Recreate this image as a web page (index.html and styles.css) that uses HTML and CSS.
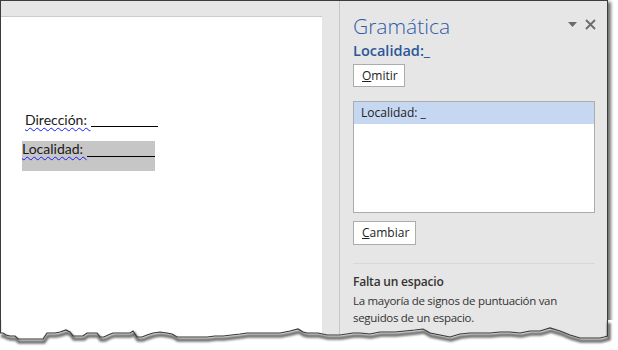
FILE: index.html
```html
<!DOCTYPE html>
<html lang="es">
<head>
<meta charset="utf-8">
<title>Gramática</title>
<link rel="stylesheet" href="styles.css">
</head>
<body>
<div class="frame">
  <div class="doc">
    <div class="page">
      <div class="line dir"><span class="word">Dirección: </span><span class="tab"></span></div>
      <div class="selbox"><div class="line loc"><span class="word">Localidad: </span><span class="tab"></span></div></div>
    </div>
  </div>
  <aside class="pane">
    <div class="pane-head">
      <h1 class="title">Gramática</h1>
      <div class="ctrls">
        <svg class="ico-drop" width="9" height="5" viewBox="0 0 9 5"><path d="M0 0H9L4.5 5Z" fill="#6b6b6b"/></svg>
        <svg class="ico-close" width="11" height="11" viewBox="0 0 11 11"><path d="M1 1L10 10M10 1L1 10" stroke="#6b6b6b" stroke-width="1.8"/></svg>
      </div>
    </div>
    <div class="err">Localidad:_</div>
    <button class="btn omit"><u>O</u>mitir</button>
    <div class="list"><div class="item active">Localidad: _</div></div>
    <button class="btn change"><u>C</u>ambiar</button>
    <hr class="sep">
    <div class="ex-title">Falta un espacio</div>
    <p class="ex-text">La mayoría de signos de puntuación van seguidos de un espacio.</p>
  </aside>
</div>
<svg class="torn" width="618" height="350" viewBox="0 0 618 350">
  <defs>
    <filter id="blur" x="-5%" y="-50%" width="110%" height="200%"><feGaussianBlur stdDeviation="1.3"/></filter>
  </defs>
  <path fill="#fff" d="M-1 333L3 333L6 335L10 336L15 336L18 339L43 339L47 333L55 333L60 332L66 330L70 332L73 336L83 336L87 333L97 333L100 337L104 337L108 335L113 333L130 333L133 331L137 337L142 337L147 335L153 333L160 332L167 333L172 334L177 337L207 337L215 336L223 336L240 334L247 333L280 333L290 331L298 329L303 332L307 333L318 333L327 335L340 335L353 333L360 333L370 334L380 332L395 332L405 331L415 330L423 329L430 333L440 335L450 337L460 334L470 333L490 333L500 332L510 332L520 333L530 331L540 331L550 328L560 331L570 335L580 338L600 338L604 337L608 336L608 320L618 320L618 350L-1 350Z"/>
  <polyline fill="none" stroke="#6e6e6e" stroke-width="3.5" filter="url(#blur)" transform="translate(1 3)" points="0 333 3 333 6 335 10 336 15 336 18 339 43 339 47 333 55 333 60 332 66 330 70 332 73 336 83 336 87 333 97 333 100 337 104 337 108 335 113 333 130 333 133 331 137 337 142 337 147 335 153 333 160 332 167 333 172 334 177 337 207 337 215 336 223 336 240 334 247 333 280 333 290 331 298 329 303 332 307 333 318 333 327 335 340 335 353 333 360 333 370 334 380 332 395 332 405 331 415 330 423 329 430 333 440 335 450 337 460 334 470 333 490 333 500 332 510 332 520 333 530 331 540 331 550 328 560 331 570 335 580 338 600 338 604 337 608 336 608 320"/>
  <polyline fill="none" stroke="#3a3a3a" stroke-width="1.2" points="0.5 320 0.5 333 3 333 6 335 10 336 15 336 18 339 43 339 47 333 55 333 60 332 66 330 70 332 73 336 83 336 87 333 97 333 100 337 104 337 108 335 113 333 130 333 133 331 137 337 142 337 147 335 153 333 160 332 167 333 172 334 177 337 207 337 215 336 223 336 240 334 247 333 280 333 290 331 298 329 303 332 307 333 318 333 327 335 340 335 353 333 360 333 370 334 380 332 395 332 405 331 415 330 423 329 430 333 440 335 450 337 460 334 470 333 490 333 500 332 510 332 520 333 530 331 540 331 550 328 560 331 570 335 580 338 600 338 604 337 607.5 336 607.5 320"/>
</svg>
</body>
</html>
```

FILE: styles.css
```css
html, body {
  margin: 0;
  padding: 0;
  background: #fff;
}
body {
  position: relative;
  width: 618px;
  height: 350px;
  overflow: hidden;
  font-family: "Open Sans", "DejaVu Sans", sans-serif;
}
.frame {
  display: flex;
  width: 606px;
  height: 342px;
  border: 1px solid #3c3c3c;
  border-bottom: none;
  box-shadow: 3px 2px 3px rgba(0, 0, 0, 0.55);
  background: #e6e6e6;
}
.doc {
  width: 338px;
  flex: none;
  padding-top: 15px;
  box-sizing: border-box;
}
.page {
  width: 321px;
  height: 340px;
  background: #fff;
  border-top: 1px solid #cbcbcb;
  padding-top: 94px;
  box-sizing: border-box;
  font-family: Lato, "Liberation Sans", sans-serif;
  font-size: 14px;
  color: #1a1a1a;
}
.line {
  display: flex;
  align-items: flex-start;
  width: 133px;
  line-height: 18px;
}
.line .word {
  white-space: pre;
  text-decoration: underline wavy #1a1aff;
  text-decoration-thickness: 1px;
  text-underline-offset: 2px;
}
.line .tab {
  flex: 1;
  height: 15px;
  border-bottom: 1px solid #000;
}
.dir {
  margin-left: 24px;
}
.selbox {
  margin: 12px 0 0 21px;
  width: 133px;
  height: 30px;
  background: #c6c6c6;
}
.loc {
  line-height: 16px;
}
.pane {
  flex: 1;
  border-left: 1px solid #c6c6c6;
  padding: 11px 12px 0 13px;
  display: flex;
  flex-direction: column;
  align-items: flex-start;
}
.pane-head {
  display: flex;
  justify-content: space-between;
  align-items: flex-start;
  width: 243px;
}
.title {
  margin: 0;
  font-size: 21px;
  font-weight: 300;
  line-height: 28px;
  color: #2e5ca8;
}
.ctrls {
  display: flex;
  align-items: center;
  gap: 8px;
  padding-top: 7px;
}
.err {
  margin-top: 2px;
  font-size: 14.5px;
  font-weight: 600;
  line-height: 18px;
  color: #2b579a;
}
.btn {
  font-family: inherit;
  font-size: 12px;
  color: #222;
  background: #fff;
  border: 1px solid #acacac;
  border-radius: 0;
  padding: 0 8px;
  margin: 0;
  line-height: 20px;
}
.omit {
  margin-top: 4px;
  height: 23px;
  width: 52px;
}
.change {
  margin-top: 8px;
  height: 24px;
  width: 63px;
}
.list {
  margin-top: 14px;
  width: 242px;
  height: 112px;
  box-sizing: border-box;
  background: #fff;
  border: 1px solid #acacac;
}
.item {
  height: 22px;
  line-height: 22px;
  padding-left: 7px;
  font-size: 12px;
  color: #222;
}
.item.active {
  background: #c5d7f1;
}
.sep {
  margin: 18px 0 0;
  width: 242px;
  border: none;
  border-top: 1px solid #d8d8d8;
}
.ex-title {
  margin-top: 10px;
  font-size: 12px;
  font-weight: 600;
  letter-spacing: -0.2px;
  line-height: 16px;
  color: #333;
}
.ex-text {
  margin: 2px 0 0;
  width: 242px;
  font-size: 11.5px;
  letter-spacing: -0.3px;
  line-height: 17px;
  color: #333;
}
.torn {
  position: absolute;
  left: 0;
  top: 0;
}
```
